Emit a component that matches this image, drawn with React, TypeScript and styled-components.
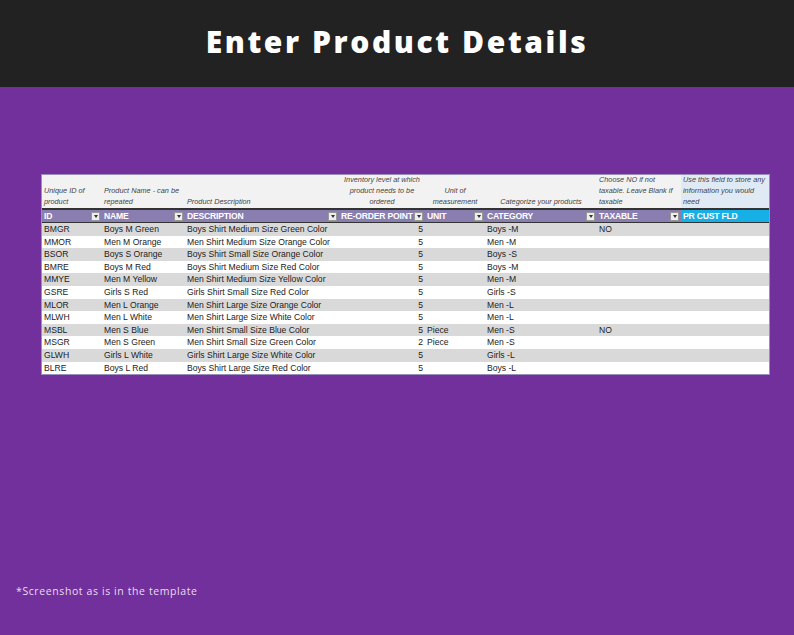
import styled, { createGlobalStyle } from "styled-components"

const Global = createGlobalStyle`
  body { margin: 0; background: #71309c; font-family: "Open Sans", "Liberation Sans", sans-serif; }
`

const cols = [
  { key: "ID", note: "Unique ID of product", w: 60, align: "left" },
  { key: "NAME", note: "Product Name - can be repeated", w: 83, align: "left" },
  { key: "DESCRIPTION", note: "Product Description", w: 154, align: "left" },
  { key: "RE-ORDER POINT", note: "Inventory level at which product needs to be ordered", w: 86, align: "center" },
  { key: "UNIT", note: "Unit of measurement", w: 60, align: "center" },
  { key: "CATEGORY", note: "Categorize your products", w: 112, align: "center" },
  { key: "TAXABLE", note: "Choose NO if not taxable. Leave Blank if taxable", w: 84, align: "left" },
  { key: "PR CUST FLD", note: "Use this field to store any information you would need", w: 88, align: "left" },
]

const rows = [
  ["BMGR", "Boys M Green", "Boys Shirt Medium Size Green Color", "5", "", "Boys -M", "NO"],
  ["MMOR", "Men M Orange", "Men Shirt Medium Size Orange Color", "5", "", "Men -M", ""],
  ["BSOR", "Boys S Orange", "Boys Shirt Small Size Orange Color", "5", "", "Boys -S", ""],
  ["BMRE", "Boys M Red", "Boys Shirt Medium Size Red Color", "5", "", "Boys -M", ""],
  ["MMYE", "Men M Yellow", "Men Shirt Medium Size Yellow Color", "5", "", "Men -M", ""],
  ["GSRE", "Girls S Red", "Girls Shirt Small Size Red Color", "5", "", "Girls -S", ""],
  ["MLOR", "Men L Orange", "Men Shirt Large Size Orange Color", "5", "", "Men -L", ""],
  ["MLWH", "Men L White", "Men Shirt Large Size White Color", "5", "", "Men -L", ""],
  ["MSBL", "Men S Blue", "Men Shirt Small Size Blue Color", "5", "Piece", "Men -S", "NO"],
  ["MSGR", "Men S Green", "Men Shirt Small Size Green Color", "2", "Piece", "Men -S", ""],
  ["GLWH", "Girls L White", "Girls Shirt Large Size White Color", "5", "", "Girls -L", ""],
  ["BLRE", "Boys L Red", "Boys Shirt Large Size Red Color", "5", "", "Boys -L", ""],
]

const template = cols.map(c => `${c.w}px`).join(" ")

const TitleBar = styled.header`
  height: 87px;
  background: #222;
  display: flex;
  align-items: center;
  justify-content: center;
  color: #fff;
  font-family: "Open Sans", sans-serif;
  font-weight: 800;
  font-size: 30px;
  letter-spacing: 2.6px;
  padding-bottom: 4px;
  box-sizing: border-box;
`
const Body = styled.main`
  height: 548px;
  display: flex;
  flex-direction: column;
  padding: 87px 0 0 41px;
  box-sizing: border-box;
`
const Sheet = styled.div`
  width: 727px;
  border: 1px solid #9a8fb8;
  background: #fff;
  font-family: "Liberation Sans", Calibri, sans-serif;
  font-size: 8.6px;
  color: #222;
`
const Row = styled.div`
  display: grid;
  grid-template-columns: ${template};
`
const Note = styled.div<{ $align: string; $last?: boolean }>`
  height: 32px;
  display: flex;
  align-items: flex-end;
  justify-content: ${p => (p.$align === "center" ? "center" : "flex-start")};
  text-align: ${p => p.$align};
  padding: 0 2px 1px;
  font-style: italic;
  font-size: 7.3px;
  line-height: 11px;
  color: #444;
  background: ${p => (p.$last ? "#dfeaf5" : "#f2f2f2")};
`
const Head = styled.div<{ $last?: boolean }>`
  height: 12px;
  display: flex;
  align-items: center;
  justify-content: space-between;
  padding-left: 2px;
  font-weight: 700;
  white-space: nowrap;
  letter-spacing: -0.2px;
  color: #fff;
  background: ${p => (p.$last ? "#16b0e6" : "#8a7eb0")};
  border-top: 2px solid #333;
  border-bottom: 1px solid #333;
`
const Drop = styled.span`
  width: 9px;
  height: 9px;
  flex: none;
  margin-right: 2px;
  background: #eee;
  border: 1px solid #999;
  box-sizing: border-box;
  display: flex;
  align-items: center;
  justify-content: center;
  &::after {
    content: "";
    border-left: 2.5px solid transparent;
    border-right: 2.5px solid transparent;
    border-top: 3px solid #333;
  }
`
const Cell = styled.div<{ $align: string; $odd: boolean }>`
  height: 12.6px;
  line-height: 12.6px;
  padding: 0 2px;
  white-space: nowrap;
  overflow: hidden;
  text-align: ${p => (p.$align === "num" ? "right" : "left")};
  background: ${p => (p.$odd ? "#d9d9d9" : "#fff")};
`
const Footnote = styled.div`
  margin-top: auto;
  margin-left: -25px;
  margin-bottom: 37px;
  color: #e8dcf0;
  font-size: 10.5px;
  letter-spacing: 0.6px;
`

export default function App() {
  return (
    <>
      <Global />
      <TitleBar>Enter Product Details</TitleBar>
      <Body>
        <Sheet>
          <Row>
            {cols.map((c, i) => (
              <Note key={c.key} $align={c.align === "center" ? "center" : "left"} $last={i === 7}>
                {c.note}
              </Note>
            ))}
          </Row>
          <Row>
            {cols.map((c, i) => (
              <Head key={c.key} $last={i === 7}>
                {c.key}
                {i < 7 && <Drop />}
              </Head>
            ))}
          </Row>
          {rows.map((r, ri) => (
            <Row key={r[0]}>
              {cols.map((c, i) => (
                <Cell key={c.key} $odd={ri % 2 === 0} $align={i === 3 ? "num" : "left"}>
                  {r[i] ?? ""}
                </Cell>
              ))}
            </Row>
          ))}
        </Sheet>
        <Footnote>*Screenshot as is in the template</Footnote>
      </Body>
    </>
  )
}
